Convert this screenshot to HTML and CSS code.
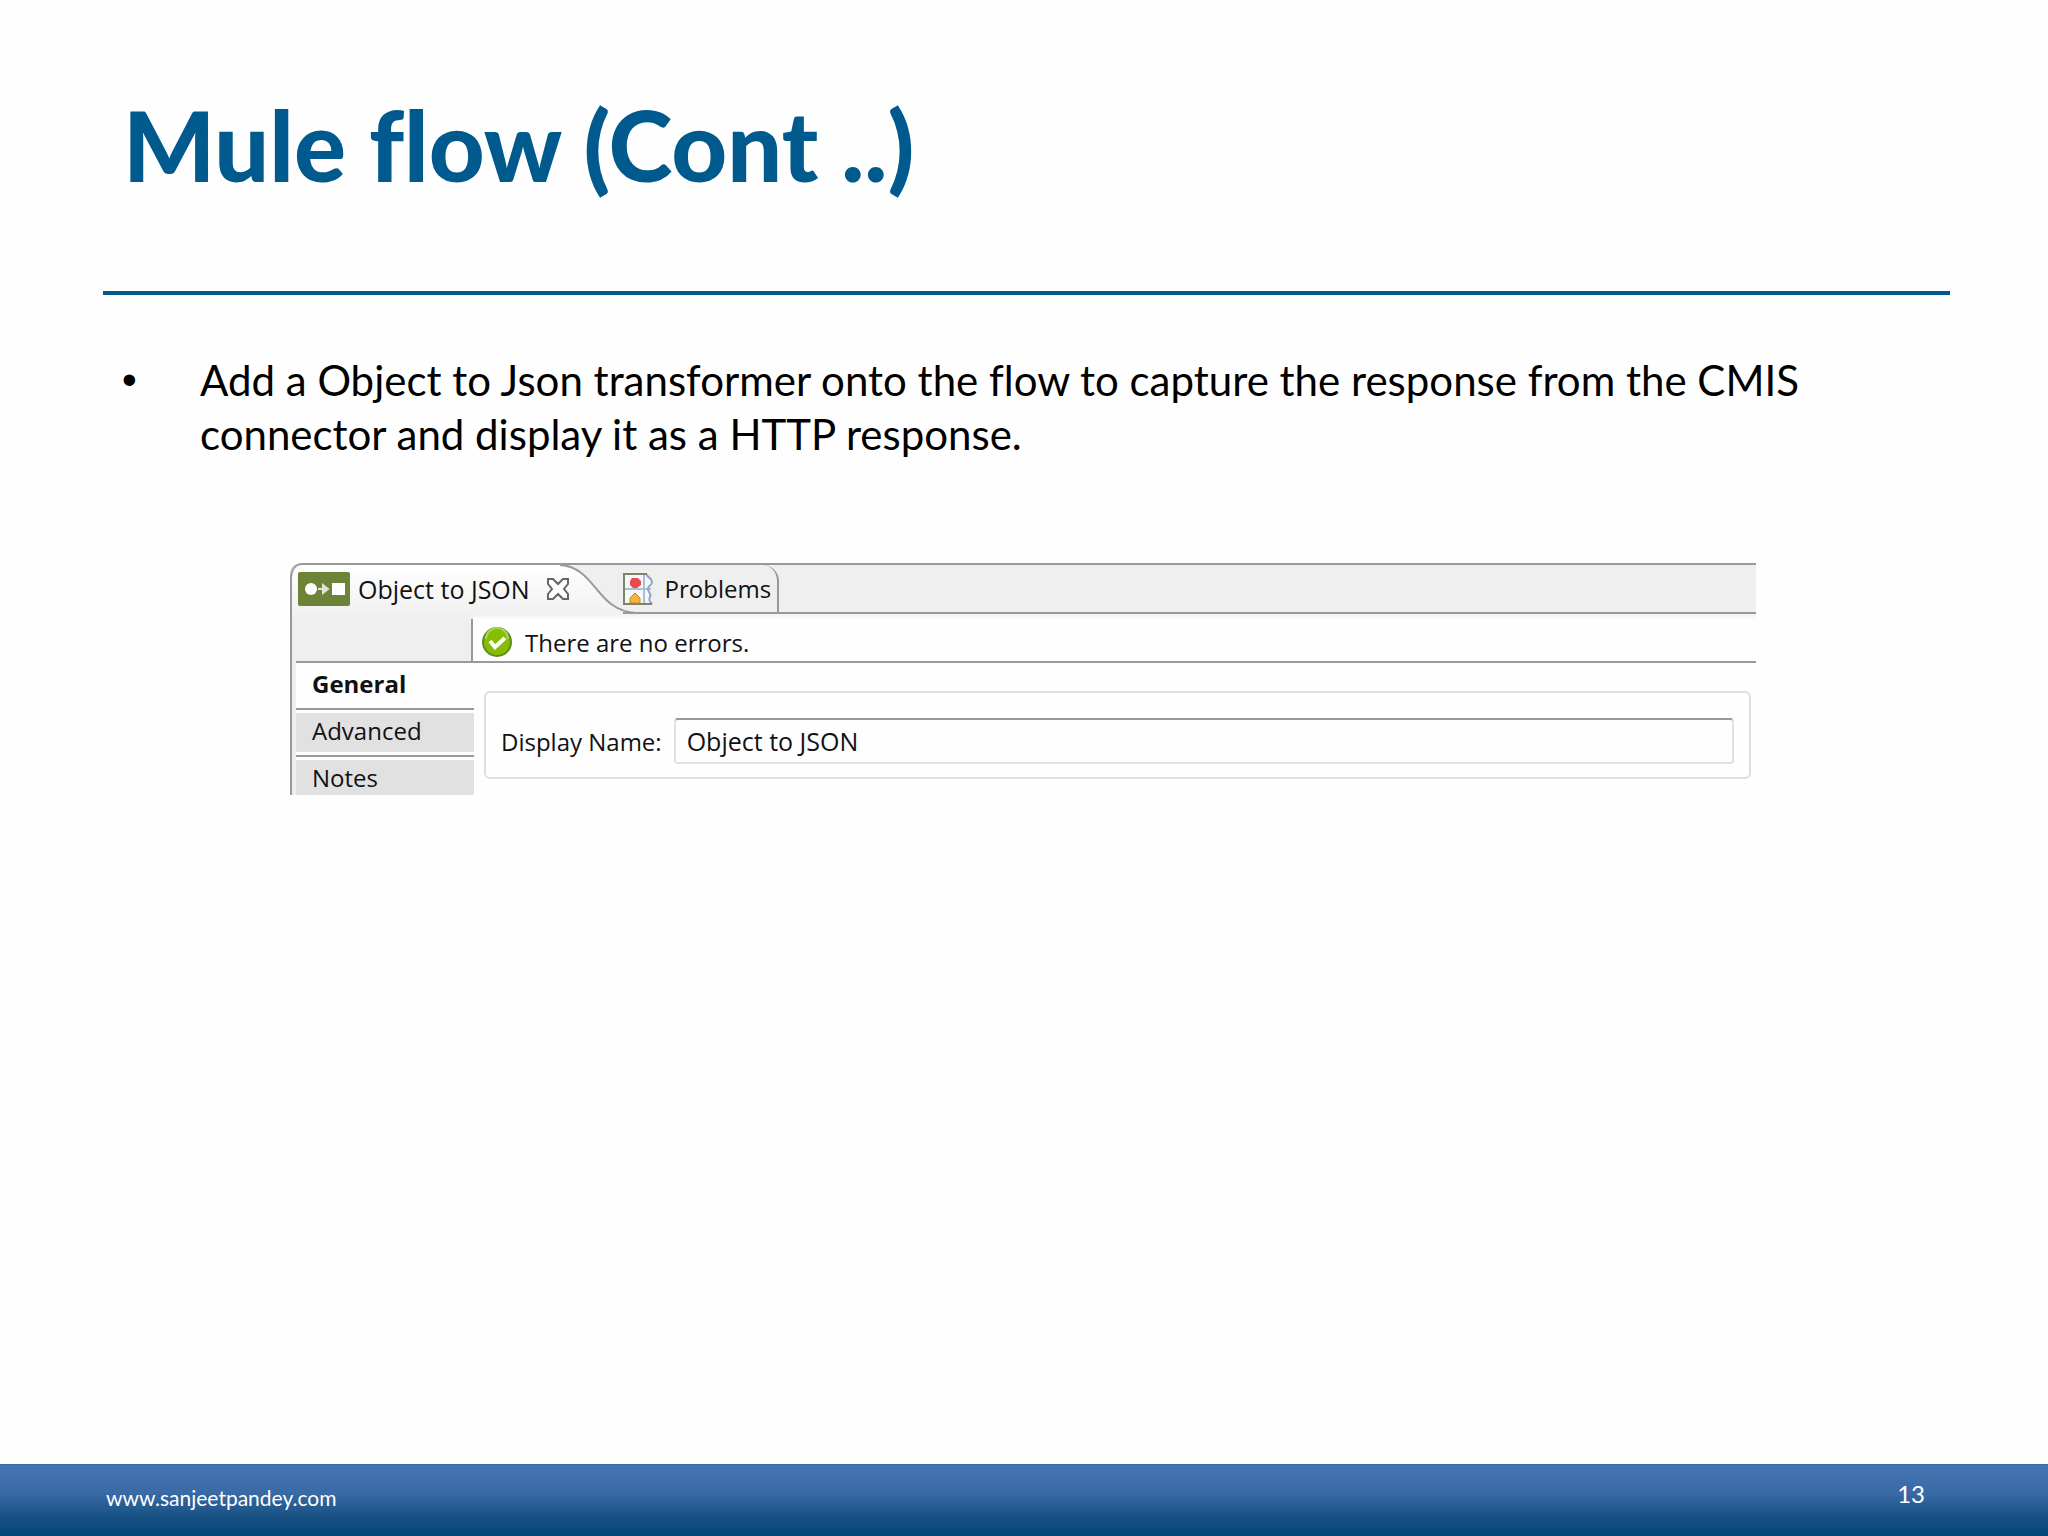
FILE: index.html
```html
<!DOCTYPE html>
<html lang="en">

<head>
    <meta charset="UTF-8">
    <meta name="viewport" content="width=device-width, initial-scale=1.0">
    <title>Mule flow (Cont ..)</title>
    <link rel="stylesheet" href="styles.css">
</head>

<body>
    <header class="slide-header">
        <h1>Mule flow (Cont ..)</h1>
    </header>

    <main class="slide-content">
        <ul class="points">
            <li>
                <span class="bullet">•</span>
                <p>Add a Object to Json transformer onto the flow to capture the response from the CMIS connector and display it as a HTTP response.</p>
            </li>
        </ul>

        <section class="panel">
            <div class="tabs">
                <div class="tab-active">
                    <svg class="icon-transform" viewBox="0 0 52 34" width="52" height="34">
                        <rect width="52" height="34" rx="2" fill="#6c8338" />
                        <circle cx="13" cy="17" r="6" fill="#fff" />
                        <path d="M20 17h6M25 13v8l5-4z" stroke="#dfe5d2" stroke-width="2" fill="#dfe5d2" />
                        <rect x="34" y="11" width="13" height="12" fill="#fff" />
                    </svg>
                    <button class="tab-btn active" type="button">Object to JSON</button>
                    <button class="close-btn" type="button" aria-label="Close">
                        <svg viewBox="0 0 24 24" width="24" height="24">
                            <path d="M2 2h5l5 5 5-5h5v5l-4 5 4 5v5h-5l-5-5-5 5H2v-5l4-5-4-5z" fill="#fff" stroke="#666" stroke-width="2" />
                        </svg>
                    </button>
                </div>
                <svg class="tab-curve" viewBox="0 0 76 50" width="76" height="50">
                    <defs>
                        <linearGradient id="tab-fill" x1="0" y1="0" x2="0" y2="1">
                            <stop offset="0" stop-color="#fff" />
                            <stop offset="1" stop-color="#f1f1f2" />
                        </linearGradient>
                    </defs>
                    <path d="M0 0C36 2 36 46 76 48v2H0z" fill="url(#tab-fill)" />
                    <path d="M0 0C36 2 36 46 76 48" fill="none" stroke="#999" stroke-width="2" />
                </svg>
                <div class="tab-problems">
                    <svg class="icon-problems" viewBox="0 0 32 32" width="32" height="32">
                        <path d="M1 1h25c-2 5 5 6 3 10s-5 4-3 9-1 7 3 11H1z" fill="#f4f8fc" />
                        <path d="M21 1v30M1 16h27" stroke="#a9bfd5" stroke-width="2" />
                        <path d="M23 1c2 4 6 4 6 8s-4 3-4 7 4 4 2 8 0 4 2 7" fill="none" stroke="#8fa3cd" stroke-width="2" />
                        <path d="M29 31H1V1h23" fill="none" stroke="#7d8364" stroke-width="2" />
                        <path d="M9 5h6l3 3v4l-4 3h-4l-3-3V8z" fill="#e84c50" />
                        <path d="M12 20l5 5v5H7v-5z" fill="#f5b640" stroke="#c98528" />
                    </svg>
                    <button class="tab-btn" type="button">Problems</button>
                </div>
                <div class="tab-rest"></div>
            </div>

            <div class="status-row">
                <div class="status">
                    <svg class="icon-ok" viewBox="0 0 32 32" width="32" height="32">
                        <circle cx="16" cy="16" r="14" fill="#85bd00" stroke="#5b8d20" stroke-width="2" />
                        <path d="M5 13a11 11 0 0 1 22 0" fill="none" stroke="#a9d755" stroke-width="2" />
                        <path d="M9 15l5 6 10-9" fill="none" stroke="#fff" stroke-width="4" />
                    </svg>
                    <span>There are no errors.</span>
                </div>
            </div>

            <div class="panel-body">
                <nav class="side">
                    <button class="side-btn selected" type="button">General</button>
                    <button class="side-btn" type="button">Advanced</button>
                    <button class="side-btn" type="button">Notes</button>
                </nav>
                <form class="fields">
                    <label for="display-name">Display Name:</label>
                    <input type="text" id="display-name" value="Object to JSON">
                </form>
            </div>
        </section>
    </main>

    <footer class="slide-footer">
        <a href="http://www.sanjeetpandey.com">www.sanjeetpandey.com</a>
        <span class="page-number">13</span>
    </footer>
</body>

</html>
```

FILE: styles.css
```css
* {
    box-sizing: border-box;
}

body {
    margin: 0;
    min-height: 100vh;
    display: flex;
    flex-direction: column;
    background-color: #fefefe;
    color: #000;
    font-family: Lato, sans-serif;
    font-variant-ligatures: none;
}

button {
    padding: 0;
    border: none;
    background: none;
    color: inherit;
    font: inherit;
    cursor: pointer;
}

svg {
    display: block;
    flex: none;
}

.slide-header {
    margin: 0 98px 0 103px;
    padding: 87px 20px 89px;
    border-bottom: 4px solid #005a8e;
}

h1 {
    margin: 0;
    color: #005a8e;
    font-size: 97px;
    line-height: 115px;
    font-weight: 900;
}

.slide-content {
    flex: 1;
    padding-top: 58px;
}

.points {
    margin: 0 220px 0 122px;
    padding: 0;
    list-style: none;
    font-size: 42px;
    line-height: 54px;
}

.points li {
    display: flex;
}

.points p {
    margin: 0;
}

.bullet {
    flex: none;
    width: 78px;
    font-family: "Liberation Sans", sans-serif;
}

/* properties panel */
.panel {
    margin: 102px 292px 0 290px;
    font-family: "Open Sans", sans-serif;
    font-size: 24px;
    color: #111;
}

.tabs {
    display: flex;
    height: 51px;
    background-color: #efeff0;
    border-top: 2px solid #999;
    border-top-left-radius: 12px;
}

.tab-active {
    display: flex;
    align-items: center;
    gap: 8px;
    padding: 0 0 2px 6px;
    border-left: 2px solid #999;
    border-top-left-radius: 12px;
    background: linear-gradient(#fff, #f1f1f2);
}

.tab-btn.active {
    font-size: 25px;
}

.close-btn {
    position: relative;
    margin: 0 -10px 0 8px;
}

.tab-problems {
    display: flex;
    align-items: center;
    gap: 10px;
    margin-left: -13px;
    padding: 0 6px 2px 0;
    border-right: 2px solid #999;
    border-top-right-radius: 16px;
    box-shadow: inset 0 -2px #999;
}

.tab-rest {
    flex: 1;
    border-bottom: 2px solid #999;
}

.status-row {
    padding-left: 4px;
    border-left: 2px solid #999;
    background-color: #efeff0;
}

.status {
    display: flex;
    align-items: center;
    gap: 12px;
    height: 49px;
    padding: 9px 0 0 185px;
    background: linear-gradient(#999, #999) 175px 5px / 2px 100% no-repeat,
        linear-gradient(#f1f1f2, #fefefe 6px) 177px 0 no-repeat;
    border-bottom: 2px solid #999;
}

.panel-body {
    display: flex;
    height: 132px;
    border-left: 2px solid #999;
}

.side {
    flex: none;
    width: 182px;
    padding-left: 4px;
    background-color: #efeff0;
    overflow: hidden;
}

.side-btn {
    display: block;
    width: 100%;
    height: 47px;
    padding: 0 16px 7px;
    border-top: 3px solid #fefefe;
    border-bottom: 2px solid #999;
    background-color: #e1e1e2;
    box-shadow: inset 0 -3px #fefefe;
    text-align: left;
}

.side-btn.selected {
    background-color: #fefefe;
    font-weight: bold;
}

.fields {
    flex: 1;
    align-self: flex-start;
    display: flex;
    align-items: center;
    gap: 12px;
    height: 88px;
    margin: 28px 5px 0 10px;
    padding: 12px 15px 0;
    border: 2px solid #d9dfe3;
    border-radius: 6px;
}

.fields input {
    flex: 1;
    min-width: 0;
    height: 46px;
    padding: 0 11px;
    border: 2px solid #dfe1e4;
    border-top-color: #999;
    border-radius: 4px;
    background-color: #fefefe;
    color: inherit;
    font: inherit;
    font-size: 25px;
}

.slide-footer {
    display: flex;
    align-items: center;
    justify-content: space-between;
    height: 72px;
    padding: 0 123px 15px 106px;
    border-top: 1px solid #356f9f;
    background: linear-gradient(#4675b5, #386aa5 40%, #165081 75%, #004878);
    color: #fff;
    font-size: 21px;
}

.slide-footer a {
    padding-top: 8px;
    color: inherit;
    text-decoration: none;
}

.page-number {
    font-size: 24px;
}
```
